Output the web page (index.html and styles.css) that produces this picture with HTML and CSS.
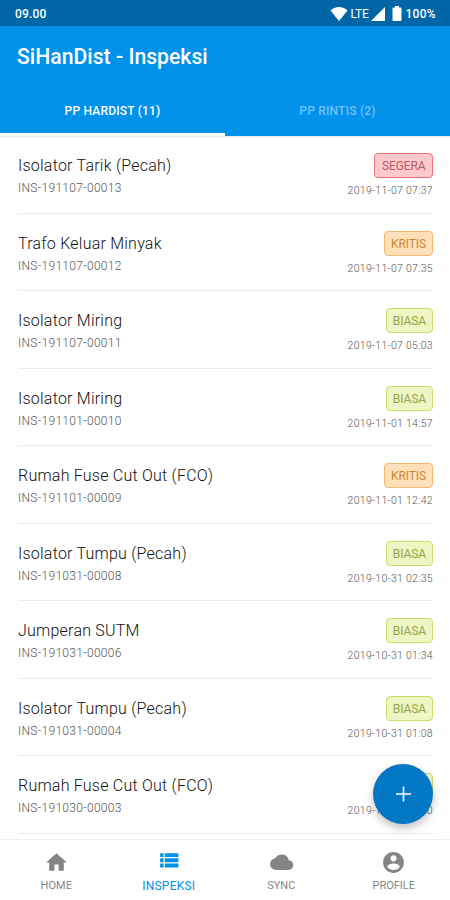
FILE: index.html
```html
<!DOCTYPE html>
<html lang="id">
<head>
<meta charset="UTF-8">
<meta name="viewport" content="width=device-width, initial-scale=1.0">
<title>SiHanDist - Inspeksi</title>
<link rel="stylesheet" href="styles.css">
</head>
<body>
<div class="statusbar">
<span class="clock">09.00</span>
<div class="status-icons">
<svg class="wifi" width="18" height="14" viewBox="0 0 18 14"><path d="M9 14L0.5 3.5Q4 0 9 0T17.500 3.500z" fill="#fff"/></svg>
<span class="lte">LTE</span>
<svg class="signal" width="14" height="14" viewBox="0 0 14 14"><path d="M14 0v14H0z" fill="#fff"/></svg>
<svg class="battery" width="10" height="15" viewBox="0 0 10 15"><path d="M3 0h4v1.500h1.500q1 0 1 1V14q0 1-1 1h-7q-1 0-1-1V2.500q0-1 1-1H3z" fill="#fff"/></svg>
<span class="percent">100%</span>
</div>
</div>

<header class="header">
<h1>SiHanDist - Inspeksi</h1>
<div class="tabs">
<a class="tab active">PP HARDIST (11)</a>
<a class="tab">PP RINTIS (2)</a>
</div>
</header>

<main class="list">
<div class="item">
<div class="info"><h2>Isolator Tarik (Pecah)</h2><p>INS-191107-00013</p></div>
<div class="meta"><span class="badge segera">SEGERA</span><time>2019-11-07 07:37</time></div>
</div>
<div class="item">
<div class="info"><h2>Trafo Keluar Minyak</h2><p>INS-191107-00012</p></div>
<div class="meta"><span class="badge kritis">KRITIS</span><time>2019-11-07 07:35</time></div>
</div>
<div class="item">
<div class="info"><h2>Isolator Miring</h2><p>INS-191107-00011</p></div>
<div class="meta"><span class="badge biasa">BIASA</span><time>2019-11-07 05:03</time></div>
</div>
<div class="item">
<div class="info"><h2>Isolator Miring</h2><p>INS-191101-00010</p></div>
<div class="meta"><span class="badge biasa">BIASA</span><time>2019-11-01 14:57</time></div>
</div>
<div class="item">
<div class="info"><h2>Rumah Fuse Cut Out (FCO)</h2><p>INS-191101-00009</p></div>
<div class="meta"><span class="badge kritis">KRITIS</span><time>2019-11-01 12:42</time></div>
</div>
<div class="item">
<div class="info"><h2>Isolator Tumpu (Pecah)</h2><p>INS-191031-00008</p></div>
<div class="meta"><span class="badge biasa">BIASA</span><time>2019-10-31 02:35</time></div>
</div>
<div class="item">
<div class="info"><h2>Jumperan SUTM</h2><p>INS-191031-00006</p></div>
<div class="meta"><span class="badge biasa">BIASA</span><time>2019-10-31 01:34</time></div>
</div>
<div class="item">
<div class="info"><h2>Isolator Tumpu (Pecah)</h2><p>INS-191031-00004</p></div>
<div class="meta"><span class="badge biasa">BIASA</span><time>2019-10-31 01:08</time></div>
</div>
<div class="item">
<div class="info"><h2>Rumah Fuse Cut Out (FCO)</h2><p>INS-191030-00003</p></div>
<div class="meta"><span class="badge biasa">BIASA</span><time>2019-10-30 10:20</time></div>
</div>
</main>

<button class="fab" aria-label="Tambah">
<svg width="16" height="16" viewBox="0 0 16 16"><path d="M8.500 0.500v15M1 8h15" stroke="#fff" stroke-width="1.600"/></svg>
</button>

<nav class="bottom-nav">
<a class="nav-item">
<svg width="25" height="25" viewBox="0 0 24 24"><path d="M10 20v-6h4v6h5v-8h3L12 3 2 12h3v8z"/></svg>
<span>HOME</span>
</a>
<a class="nav-item active">
<svg width="25" height="25" viewBox="0 0 24 24"><path d="M4 3h3.300v3.800H4zM8.500 3h13v3.800h-13zM4 8h3.300v3.800H4zM8.500 8h13v3.800h-13zM4 13h3.300v3.800H4zM8.500 13h13v3.800h-13z"/></svg>
<span>INSPEKSI</span>
</a>
<a class="nav-item">
<svg width="25" height="25" viewBox="0 0 24 24"><path d="M19.350 10.040A7.490 7.490 0 0 0 12 4C9.110 4 6.600 5.640 5.350 8.040A5.994 5.994 0 0 0 0 14c0 3.310 2.690 6 6 6h13c2.760 0 5-2.240 5-5 0-2.640-2.050-4.780-4.650-4.960z" transform="translate(1 0.500) scale(0.930)"/></svg>
<span>SYNC</span>
</a>
<a class="nav-item">
<svg width="25" height="25" viewBox="0 0 24 24"><path d="M12 2C6.480 2 2 6.480 2 12s4.480 10 10 10 10-4.480 10-10S17.520 2 12 2zm0 3c1.660 0 3 1.340 3 3s-1.340 3-3 3-3-1.340-3-3 1.340-3 3-3zm0 14.200c-2.500 0-4.710-1.280-6-3.220.03-1.990 4-3.080 6-3.080 1.990 0 5.970 1.090 6 3.080-1.290 1.940-3.500 3.220-6 3.220z"/></svg>
<span>PROFILE</span>
</a>
</nav>
</body>
</html>
```
FILE: styles.css
```css
* {
box-sizing: border-box;
}
body {
margin: 0;
height: 900px;
display: flex;
flex-direction: column;
overflow: hidden;
font-family: Roboto, sans-serif;
background-color: #fff;
}
.statusbar {
height: 26px;
flex: none;
display: flex;
justify-content: space-between;
align-items: center;
padding: 1px 14px 0 15px;
background-color: #0066a6;
color: #fff;
font-size: 12px;
font-weight: 500;
}
.clock {
letter-spacing: 0.2px;
}
.status-icons {
display: flex;
align-items: center;
}
.lte {
margin: 0 2px 0 3px;
font-weight: 400;
letter-spacing: -0.3px;
}
.battery {
margin: 0 4px 0 7px;
}
.percent {
letter-spacing: 0.3px;
}
.header {
height: 110px;
flex: none;
display: flex;
flex-direction: column;
background-color: #0091ea;
box-shadow: 0 1px 1px rgba(0,0,0,0.08);
}
h1 {
margin: 0;
padding-left: 17px;
height: 60px;
line-height: 62px;
font-size: 21.2px;
font-weight: 500;
color: #fff;
}
.tabs {
height: 50px;
display: flex;
}
.tab {
flex: 1;
height: 50px;
text-align: center;
line-height: 50px;
font-size: 12px;
font-weight: 500;
letter-spacing: 0.2px;
color: #74c3f5;
}
.tab.active {
color: #fff;
box-shadow: inset 0 -3px #fff;
}
.list {
flex: 1;
min-height: 0;
overflow: hidden;
padding: 0 17px 0 18px;
}
.item {
height: 77.5px;
display: flex;
justify-content: space-between;
border-bottom: 1px solid #ebebeb;
}
h2 {
margin: 20px 0 0;
line-height: 20px;
font-size: 16px;
font-weight: 300;
letter-spacing: 0.23px;
color: #111;
}
.info p {
margin: 4px 0 0;
line-height: 16px;
font-size: 12px;
font-weight: 300;
letter-spacing: 0.3px;
color: #555;
}
.meta {
display: flex;
flex-direction: column;
align-items: flex-end;
padding-top: 17px;
}
.badge {
height: 25px;
padding: 0 6px;
line-height: 24px;
border: 1px solid;
border-radius: 4px;
font-size: 12px;
letter-spacing: -0.1px;
}
.segera {
padding: 0 6.5px;
color: #b75b62;
background-color: #ffc9ce;
border-color: #ef7078;
}
.kritis {
color: #cc8635;
background-color: #ffe0b8;
border-color: #f8b873;
}
.biasa {
color: #94a544;
background-color: #f0f5c4;
border-color: #cddd68;
}
time {
margin-top: 6px;
line-height: 14px;
font-size: 10.5px;
font-weight: 300;
letter-spacing: 0.3px;
color: #555;
}
.fab {
position: fixed;
right: 17px;
bottom: 76px;
width: 60px;
height: 60px;
display: flex;
justify-content: center;
align-items: center;
padding: 0;
border: none;
border-radius: 50%;
background-color: #0277c4;
box-shadow: 0 4px 8px rgba(0,0,0,0.25);
}
.bottom-nav {
height: 61px;
flex: none;
display: flex;
border-top: 1px solid #f0f0f0;
background-color: #fff;
}
.nav-item {
flex: 1;
display: flex;
flex-direction: column;
align-items: center;
padding-top: 10px;
font-size: 11px;
line-height: 14px;
color: #858585;
}
.nav-item svg {
fill: #858585;
}
.nav-item span {
margin-top: 4px;
}
.nav-item.active {
color: #0091ea;
font-size: 12px;
letter-spacing: 0.2px;
}
.nav-item.active svg {
fill: #0091ea;
}
```
